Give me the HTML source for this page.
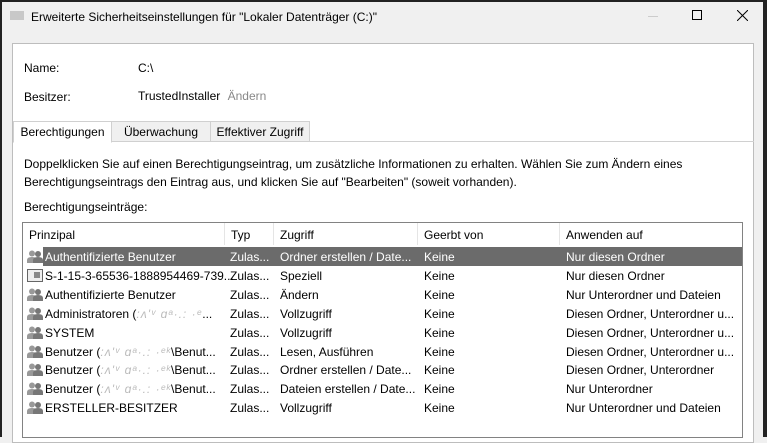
<!DOCTYPE html>
<html><head><meta charset="utf-8"><style>
*{margin:0;padding:0;box-sizing:border-box}
body{width:767px;height:437px;overflow:hidden;background:#f0f0f0;font-family:"Liberation Sans",sans-serif;font-size:12px;color:#000;position:relative}
.a{position:absolute;white-space:nowrap}
.edge{position:absolute;background:#222}
.panel{position:absolute;left:12px;top:43px;width:742px;height:400px;background:#fff;border:1px solid #bdbdbd}
.tab{position:absolute;top:121px;height:21px;border:1px solid #d0d0d0;background:#f0f0f0;padding:3px 0 0 0;text-align:center}
.list{position:absolute;left:22px;top:222px;width:721px;height:216px;border:1px solid #828282;background:#fff}
.hdr{position:absolute;top:0;height:22px;border-right:1px solid #e5e5e5;padding:5px 0 0 6px}
.row{position:absolute;left:0;width:719px;height:19px}
.row span{position:absolute;top:3px;white-space:nowrap}
.sel{background:#6b6b6b;color:#fff}
.ic{position:absolute;left:4px;top:3px;width:16px;height:13px}
.blur{color:#bbb;letter-spacing:1px}
</style></head><body>
<div class="edge" style="left:0;top:0;width:767px;height:2px"></div>
<div class="edge" style="left:0;top:0;width:2px;height:437px"></div>
<div class="edge" style="left:763px;top:0;width:4px;height:437px"></div>
<div class="a" style="left:10px;top:11px;width:14px;height:9px;background:#c8c8c8"></div>
<div class="a" style="left:31px;top:10px">Erweiterte Sicherheitseinstellungen für "Lokaler Datenträger (C:)"</div>
<div class="a" style="left:648px;top:16px;width:10px;height:1px;background:#ccc"></div>
<div class="a" style="left:692px;top:10px;width:10px;height:10px;border:1px solid #000"></div>
<svg class="a" style="left:737px;top:10px" width="11" height="11"><path d="M0 0L11 11M11 0L0 11" stroke="#000" stroke-width="1"/></svg>
<div class="panel"></div>
<div class="a" style="left:24px;top:61px">Name:</div>
<div class="a" style="left:138px;top:61px">C:\</div>
<div class="a" style="left:24px;top:90px">Besitzer:</div>
<div class="a" style="left:138px;top:89px">TrustedInstaller <span style="color:#888;margin-left:4px">Ändern</span></div>
<div class="a" style="left:111px;top:141px;width:643px;height:1px;background:#d0d0d0"></div>
<div class="tab" style="left:111px;width:100px">Überwachung</div>
<div class="tab" style="left:210px;width:100px">Effektiver Zugriff</div>
<div class="tab" style="left:13px;width:99px;background:#fff;border-bottom-color:#fff;height:22px">Berechtigungen</div>
<div class="a" style="left:24px;top:157px">Doppelklicken Sie auf einen Berechtigungseintrag, um zusätzliche Informationen zu erhalten. Wählen Sie zum Ändern eines</div>
<div class="a" style="left:24px;top:175px">Berechtigungseintrags den Eintrag aus, und klicken Sie auf "Bearbeiten" (soweit vorhanden).</div>
<div class="a" style="left:24px;top:200px">Berechtigungseinträge:</div>
<div class="list">
<div class="hdr" style="left:0;width:202px">Prinzipal</div>
<div class="hdr" style="left:202px;width:49px">Typ</div>
<div class="hdr" style="left:251px;width:144px">Zugriff</div>
<div class="hdr" style="left:395px;width:142px">Geerbt von</div>
<div class="hdr" style="left:537px;width:182px;border-right:none">Anwenden auf</div>
<div class="row sel" style="top:24px;left:20px;width:699px"></div>
<div id="rows"></div>
</div>
<script>
var d=[["Authentifizierte Benutzer","Ordner erstellen / Date...","Nur diesen Ordner"],
["S-1-15-3-65536-1888954469-739...","Speziell","Nur diesen Ordner"],
["Authentifizierte Benutzer","Ändern","Nur Unterordner und Dateien"],
["Administratoren (<i class=blur>:ʌ'ᵛ ɑᵃ·.: ·ᵉ</i>...","Vollzugriff","Diesen Ordner, Unterordner u..."],
["SYSTEM","Vollzugriff","Diesen Ordner, Unterordner u..."],
["Benutzer (<i class=blur>:ʌ'ᵛ ɑᵃ·.: ·ᵉᵏ</i>\\Benut...","Lesen, Ausführen","Diesen Ordner, Unterordner u..."],
["Benutzer (<i class=blur>:ʌ'ᵛ ɑᵃ·.: ·ᵉᵏ</i>\\Benut...","Ordner erstellen / Date...","Diesen Ordner, Unterordner"],
["Benutzer (<i class=blur>:ʌ'ᵛ ɑᵃ·.: ·ᵉᵏ</i>\\Benut...","Dateien erstellen / Date...","Nur Unterordner"],
["ERSTELLER-BESITZER","Vollzugriff","Nur Unterordner und Dateien"]];
var h="";
d.forEach(function(r,i){
var t=24+i*18.9;var c=i==0?"color:#fff;":"";
var ic=i==1?'<svg class="ic" viewBox="0 0 16 13"><rect x="0.5" y="0.5" width="15" height="12" fill="#eee" stroke="#666"/><rect x="7" y="3" width="6" height="6" fill="#888"/></svg>':
'<svg class="ic" viewBox="0 0 16 13"><circle cx="5" cy="3.5" r="3" fill="#999"/><path d="M0 13v-3q0-3 5-3q5 0 5 3v3z" fill="#999"/><circle cx="11" cy="4" r="3" fill="#777"/><path d="M6 13v-3q0-3 5-3q5 0 5 3v3z" fill="#777"/></svg>';
h+='<div class="row" style="top:'+t+'px;'+c+'">'+ic+'<span style="left:22px">'+r[0]+'</span><span style="left:207px">Zulas...</span><span style="left:257px">'+r[1]+'</span><span style="left:401px">Keine</span><span style="left:543px">'+r[2]+'</span></div>';
});
document.getElementById("rows").innerHTML=h;
</script>
</body></html>
